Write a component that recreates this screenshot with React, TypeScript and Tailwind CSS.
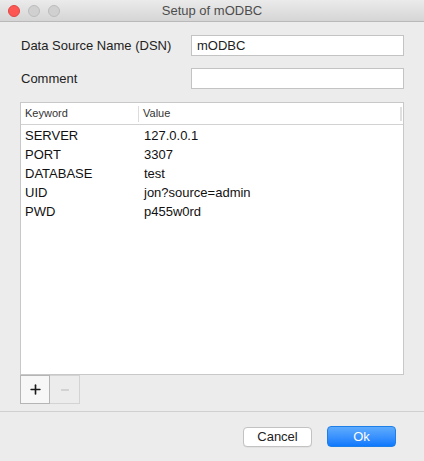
import {Plus, Minus} from "lucide-react";

const PARAMS = [
    {key: "SERVER", value: "127.0.0.1"},
    {key: "PORT", value: "3307"},
    {key: "DATABASE", value: "test"},
    {key: "UID", value: "jon?source=admin"},
    {key: "PWD", value: "p455w0rd"}
];

function Field({label, value}: {label: string; value: string}) {
    return (
        <div className="flex items-center h-[21px]">
            <div className="w-[170px] text-[13px] text-[#222]">{label}</div>
            <div className="flex-1 h-[21px] bg-white border border-[#c3c3c3] px-[5px] flex items-center text-[13px] text-[#222]">
                {value}
            </div>
        </div>
    );
}

export default function App() {
    return (
        <div
            className="w-[424px] h-[461px] bg-[#ececec] flex flex-col overflow-hidden"
            style={{fontFamily: '"Liberation Sans", Arial, sans-serif'}}
        >
            {/* title bar */}
            <div className="relative h-[22px] shrink-0 bg-gradient-to-b from-[#ebebeb] to-[#d5d5d5] border-b border-[#b9b9b9] flex items-center justify-center">
                <div className="absolute left-[8px] top-[5px] flex gap-[8px]">
                    <span className="w-[12px] h-[12px] rounded-full bg-[#fc5753] border border-[#df4744]" />
                    <span className="w-[12px] h-[12px] rounded-full bg-[#d0d0d0] border border-[#bcbcbc]" />
                    <span className="w-[12px] h-[12px] rounded-full bg-[#d0d0d0] border border-[#bcbcbc]" />
                </div>
                <span className="text-[13px] text-[#4d4d4d]">Setup of mODBC</span>
            </div>

            {/* form */}
            <div className="flex flex-col pl-[21px] pr-[20px] pt-[13px] gap-[12px]">
                <Field label="Data Source Name (DSN)" value="mODBC" />
                <Field label="Comment" value="" />
            </div>

            {/* table */}
            <div className="mt-[13px] ml-[20px] mr-[20px] h-[273px] bg-white border border-[#c8c8c8] flex flex-col">
                <div className="h-[22px] shrink-0 border-b border-[#d2d2d2] flex items-center text-[11px] text-[#333]">
                    <div className="w-[118px] pl-[4px] h-[16px] border-r border-[#dcdcdc] flex items-center">Keyword</div>
                    <div className="flex-1 pl-[4px]">Value</div>
                    <div className="w-[2px] h-[14px] bg-[#e0e0e0] mr-[1px]" />
                </div>
                <div className="pt-[1px] flex flex-col">
                    {PARAMS.map(p => (
                        <div key={p.key} className="h-[19px] flex items-center text-[13px] text-[#111]">
                            <div className="w-[118px] pl-[4px]">{p.key}</div>
                            <div className="flex-1 pl-[5px]">{p.value}</div>
                        </div>
                    ))}
                </div>
            </div>

            {/* add / remove */}
            <div className="ml-[20px] flex">
                <button className="w-[30px] h-[29px] bg-[#f7f7f7] border border-[#b5b5b5] flex items-center justify-center">
                    <Plus size={15} strokeWidth={2.6} className="text-[#1a1a1a]" />
                </button>
                <button className="w-[30px] h-[29px] bg-[#ececec] border border-[#d3d3d3] border-l-0 flex items-center justify-center">
                    <Minus size={12} strokeWidth={2} className="text-[#b8b8b8]" />
                </button>
            </div>

            <div className="mt-[7px] border-t border-[#d0d0d0]" />

            {/* footer */}
            <div className="mt-[14px] flex justify-end gap-[15px] pr-[28px]">
                <button className="w-[69px] h-[20px] mt-[1px] bg-white border border-[#c2c2c2] rounded-[4px] text-[13px] text-[#222] flex items-center justify-center shadow-[0_0.5px_0.5px_rgba(0,0,0,0.08)]">
                    Cancel
                </button>
                <button className="w-[69px] h-[21px] rounded-[4px] bg-gradient-to-b from-[#5eabfd] to-[#0a79fd] border border-[#1f7fe8] text-[13px] text-white flex items-center justify-center">
                    Ok
                </button>
            </div>
        </div>
    );
}
